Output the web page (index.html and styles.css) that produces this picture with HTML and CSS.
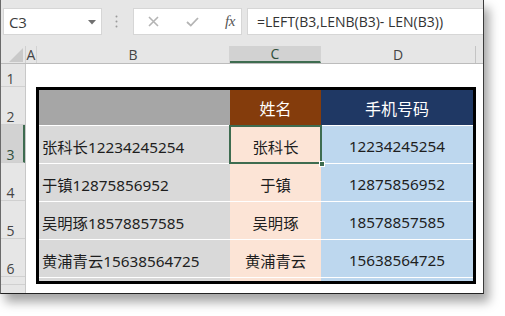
FILE: index.html
```html
<!DOCTYPE html>
<html>
<head>
<meta charset="utf-8">
<link rel="stylesheet" href="styles.css">
</head>
<body>
<div class="window">
  <div class="toolbar">
    <div class="namebox">
      <span class="ref">C3</span>
      <svg class="caret" width="8" height="5" viewBox="0 0 8 5"><path d="M0 0H8L4 4.5Z" fill="#707070"/></svg>
    </div>
    <div class="grip">
      <svg width="3" height="13" viewBox="0 0 3 13"><circle cx="1.5" cy="1.5" r="1" fill="#9a9a9a"/><circle cx="1.5" cy="6.5" r="1" fill="#9a9a9a"/><circle cx="1.5" cy="11.5" r="1" fill="#9a9a9a"/></svg>
    </div>
    <div class="fxbox">
      <svg class="cancel" width="11" height="11" viewBox="0 0 11 11"><path d="M1 1L10 10M10 1L1 10" stroke="#b4b4b4" stroke-width="1.6" fill="none"/></svg>
      <svg class="enter" width="13" height="10" viewBox="0 0 13 10"><path d="M1 5L4.8 8.6L12 1" stroke="#b4b4b4" stroke-width="1.8" fill="none"/></svg>
      <span class="fx">fx</span>
    </div>
    <div class="formula">=LEFT(B3,LENB(B3)- LEN(B3))</div>
  </div>
  <div class="colheads">
    <div class="corner"><svg width="14" height="14" viewBox="0 0 14 14"><path d="M14 0V14H0Z" fill="#c9c9c9"/></svg></div>
    <div class="ch ch-a">A</div>
    <div class="ch ch-b">B</div>
    <div class="ch ch-c active">C</div>
    <div class="ch ch-d">D</div>
    <div class="ch ch-rest"></div>
  </div>
  <div class="sheet">
    <div class="rowheads">
      <div class="rh r1">1</div>
      <div class="rh">2</div>
      <div class="rh active">3</div>
      <div class="rh">4</div>
      <div class="rh">5</div>
      <div class="rh">6</div>
      <div class="rh last"></div>
    </div>
    <div class="cells">
      <div class="table">
        <div class="tr head">
          <div class="td b"></div>
          <div class="td c">姓名</div>
          <div class="td d">手机号码</div>
        </div>
        <div class="tr">
          <div class="td b">张科长12234245254</div>
          <div class="td c sel">张科长<span class="handle"></span></div>
          <div class="td d">12234245254</div>
        </div>
        <div class="tr">
          <div class="td b">于镇12875856952</div>
          <div class="td c">于镇</div>
          <div class="td d">12875856952</div>
        </div>
        <div class="tr">
          <div class="td b">吴明琢18578857585</div>
          <div class="td c">吴明琢</div>
          <div class="td d">18578857585</div>
        </div>
        <div class="tr">
          <div class="td b">黄浦青云15638564725</div>
          <div class="td c">黄浦青云</div>
          <div class="td d">15638564725</div>
        </div>
        <div class="tr stub">
          <div class="td b"></div>
          <div class="td c"></div>
          <div class="td d"></div>
        </div>
      </div>
    </div>
  </div>
</div>
</body>
</html>
```

FILE: styles.css
```css
* { box-sizing: border-box; }

html, body {
  margin: 0;
  padding: 0;
  background: #ffffff;
}

body {
  width: 505px;
  height: 316px;
  overflow: hidden;
  font-family: "Open Sans", "Noto Sans CJK SC", sans-serif;
}

.window {
  width: 484px;
  height: 294px;
  border-left: 1px solid #6a6a6a;
  border-right: 1px solid #3a3a3a;
  border-bottom: 1px solid #222222;
  background: #ffffff;
  box-shadow: 5px 8px 10px rgba(0, 0, 0, 0.36);
  overflow: hidden;
  display: flex;
  flex-direction: column;
}

/* ---------- formula bar ---------- */
.toolbar {
  height: 46px;
  flex: none;
  display: flex;
  align-items: flex-start;
  padding: 8px 0 0 2px;
  background: #e6e6e6;
}

.namebox,
.fxbox,
.formula {
  height: 27px;
  background: #ffffff;
  border: 1px solid #d6d6d6;
  display: flex;
  align-items: center;
}

.namebox {
  width: 99px;
  padding: 0 5px 0 5px;
  justify-content: space-between;
}

.ref {
  font-size: 15px;
  color: #3c3c3c;
  letter-spacing: -0.3px;
}

.caret { margin-top: 1px; }

.grip {
  width: 31px;
  height: 27px;
  display: flex;
  align-items: center;
  justify-content: center;
  padding-right: 2px;
}

.fxbox {
  width: 109px;
  padding: 0 0 0 14px;
}

.cancel { margin-right: 27px; }
.enter { margin-right: 26px; }

.fx {
  font-family: "Liberation Serif", serif;
  font-style: italic;
  font-size: 15px;
  color: #555555;
  letter-spacing: -0.5px;
}

.formula {
  flex: 1;
  margin-left: 5px;
  padding-left: 9px;
  font-size: 14px;
  color: #333333;
  border-right: none;
  white-space: nowrap;
}

/* ---------- column headers ---------- */
.colheads {
  height: 18px;
  flex: none;
  display: flex;
  background: #e6e6e6;
  border-bottom: 1px solid #bcbcbc;
}

.corner {
  width: 25px;
  border-right: 1px solid #d0d0d0;
  display: flex;
  align-items: flex-end;
  justify-content: flex-end;
  padding: 0 2px 1px 0;
}

.ch {
  height: 17px;
  border-right: 1px solid #d3d3d3;
  font-size: 14px;
  line-height: 17px;
  color: #444444;
  text-align: center;
}

.ch-a { width: 11px; }
.ch-b { width: 193px; }
.ch-c { width: 91px; }
.ch-d { width: 155px; border-right-color: #c4c4c4; }
.ch-rest { flex: 1; border-right: none; }

.ch.active {
  background: #d2d2d2;
  border-bottom: 2px solid #3e6c50;
  color: #2f4f3c;
  line-height: 16px;
}

/* ---------- sheet ---------- */
.sheet {
  flex: 1;
  display: flex;
  min-height: 0;
}

.rowheads {
  width: 25px;
  flex: none;
  background: #e6e6e6;
  border-right: 1px solid #c8c8c8;
  display: flex;
  flex-direction: column;
}

.rh {
  height: 38px;
  flex: none;
  border-bottom: 1px solid #d0d0d0;
  display: flex;
  align-items: flex-end;
  padding: 0 5px 0 0;
  justify-content: center;
  font-size: 14px;
  line-height: 14px;
  color: #444444;
}

.rh.r1 { height: 23px; }
.rh.last { height: 8px; }

.rh.active {
  background: #d2d2d2;
  border-right: 2px solid #3e6c50;
  padding-right: 3px;
  color: #2f4f3c;
}

.cells {
  flex: 1;
  padding: 23px 0 0 10px;
}

.table {
  width: 440px;
  border: 3px solid #000000;
  font-family: "Noto Sans", "Noto Sans CJK SC", sans-serif;
  font-size: 15.3px;
  color: #1e1e1e;
}

.tr {
  display: grid;
  grid-template-columns: 191px 91px 152px;
  height: 38px;
  border-top: 1px solid rgba(255, 255, 255, 0.85);
}

.tr.head {
  height: 35px;
  border-top: none;
  font-size: 16px;
  color: #ffffff;
}

.tr.stub { height: 4px; }

.td {
  display: flex;
  align-items: center;
  justify-content: center;
  padding-top: 2px;
  white-space: nowrap;
}

.td.b {
  background: #d9d9d9;
  justify-content: flex-start;
  padding-left: 3px;
}

.td.c { background: #fce4d6; }
.td.d { background: #bdd7ee; }

.head .td { padding-top: 0; }
.head .td.b { background: #a6a6a6; }
.head .td.c { background: #843c0c; }
.head .td.d { background: #1f3864; }

.td.sel { position: relative; }

.td.sel::after {
  content: "";
  position: absolute;
  left: -1px;
  top: -1px;
  right: -1px;
  bottom: -1px;
  border: 2px solid #3e6c50;
}

.handle {
  position: absolute;
  right: -4px;
  bottom: -4px;
  width: 6px;
  height: 6px;
  background: #3e6c50;
  border: 1px solid #ffffff;
  z-index: 1;
}
```
